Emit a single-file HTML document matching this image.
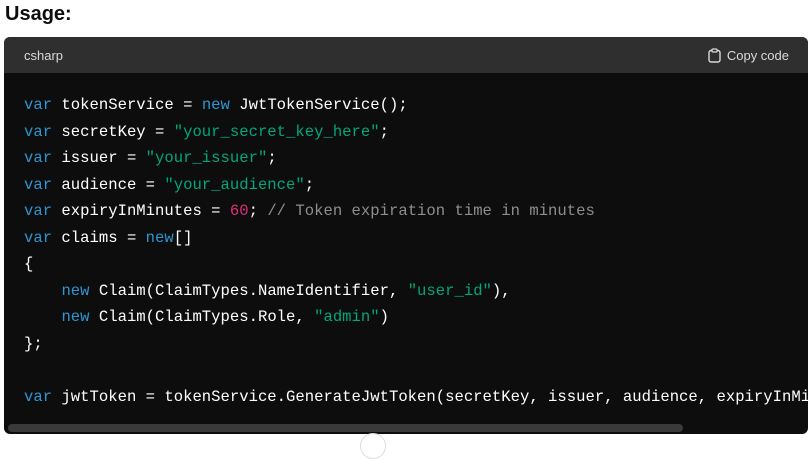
<!DOCTYPE html>
<html><head><style>
body{margin:0;background:#fff;width:812px;height:441px;overflow:hidden;position:relative;font-family:"Liberation Sans",sans-serif}
h3{position:absolute;left:5px;top:3px;margin:0;font-size:20px;line-height:22px;font-weight:bold;color:#0d0d0d}
.box{position:absolute;left:4px;top:37px;width:804px;height:397px;background:#0d0d0d;border-radius:6px;overflow:hidden}
.hd{height:36px;background:#2f2f2f;color:#d9d9d9;font-size:13px;display:flex;align-items:center;justify-content:space-between;padding:0 19px 0 20px}
.cp{display:flex;align-items:center;gap:6px}
pre{margin:0;padding:19px 0 0 20px;font-family:"Liberation Mono",monospace;font-size:15.6px;line-height:26.5px;color:#fff;white-space:pre}
.k{color:#2e95d3}.s{color:#00a67d}.n{color:#df3079}.c{color:#8e8e8e}
.sb{position:absolute;left:4px;bottom:2px;width:675px;height:8px;background:#3a3a3a;border-radius:4px}
.knob{position:absolute;left:360px;top:433px;width:24px;height:24px;border-radius:50%;background:#fff;border:1px solid #ddd}
</style></head><body>
<h3>Usage:</h3>
<div class="box">
<div class="hd"><span>csharp</span><span class="cp"><svg width="13" height="15" viewBox="0 0 13 15"><rect x="1" y="2.5" width="11" height="11.5" rx="2" fill="none" stroke="#d9d9d9" stroke-width="1.4"/><rect x="4" y="1" width="5" height="3" rx="1" fill="#2f2f2f" stroke="#d9d9d9" stroke-width="1.3"/></svg>Copy code</span></div>
<pre><span class="k">var</span> tokenService = <span class="k">new</span> JwtTokenService();
<span class="k">var</span> secretKey = <span class="s">"your_secret_key_here"</span>;
<span class="k">var</span> issuer = <span class="s">"your_issuer"</span>;
<span class="k">var</span> audience = <span class="s">"your_audience"</span>;
<span class="k">var</span> expiryInMinutes = <span class="n">60</span>; <span class="c">// Token expiration time in minutes</span>
<span class="k">var</span> claims = <span class="k">new</span>[]
{
    <span class="k">new</span> Claim(ClaimTypes.NameIdentifier, <span class="s">"user_id"</span>),
    <span class="k">new</span> Claim(ClaimTypes.Role, <span class="s">"admin"</span>)
};

<span class="k">var</span> jwtToken = tokenService.GenerateJwtToken(secretKey, issuer, audience, expiryInMinutes, claims);</pre>
<div class="sb"></div>
</div>
<div class="knob"></div>
</body></html>
